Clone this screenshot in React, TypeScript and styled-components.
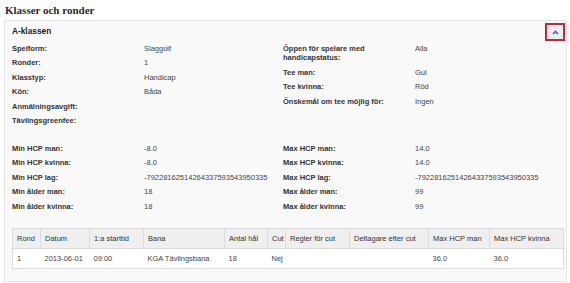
import React from "react";
import styled, { createGlobalStyle } from "styled-components";

const GlobalStyle = createGlobalStyle`
    html, body {
        margin: 0;
        padding: 0;
        background: #ffffff;
    }
    body {
        font-family: "Liberation Sans", Arial, sans-serif;
        color: #333;
    }
`;

const Page = styled.div`
    width: 570px;
    height: 283px;
    overflow: hidden;
`;

const Heading = styled.h2`
    margin: 0;
    padding: 4px 5px 0;
    height: 16px;
    box-sizing: border-box;
    font-family: "Liberation Serif", "Times New Roman", serif;
    font-size: 11px;
    line-height: 12px;
    font-weight: bold;
    color: #2b2b2b;
`;

const Panel = styled.div`
    margin: 4px 0 0 4px;
    width: 563px;
    box-sizing: border-box;
    background: #f9f9f9;
    border: 1px solid #e6e6e6;
    padding: 0 7px 12px;
`;

const PanelHeader = styled.div`
    display: flex;
    align-items: center;
    justify-content: space-between;
    height: 20px;
    margin-right: -6px;
`;

const PanelTitle = styled.div`
    font-size: 8.3px;
    font-weight: bold;
    color: #222;
`;

const ToggleFrame = styled.div`
    width: 20px;
    height: 18px;
    box-sizing: border-box;
    border: 2px solid #d0222c;
    display: flex;
    align-items: center;
    justify-content: center;
    margin-top: 2px;
`;

const ToggleButton = styled.button`
    width: 14px;
    height: 12px;
    padding: 0;
    border: 1px solid #e2e4e8;
    border-radius: 2px;
    background: #eef0f3;
    display: flex;
    align-items: center;
    justify-content: center;
    cursor: pointer;
`;

const Section = styled.div<{ $gap?: number }>`
    display: grid;
    grid-template-columns: 271px 1fr;
    margin-top: ${p => p.$gap ?? 0}px;
`;

const Column = styled.div`
    display: flex;
    flex-direction: column;
`;

const Row = styled.div`
    display: grid;
    grid-template-columns: 132px 1fr;
    padding: 2.5px 0;
    font-size: 7.5px;
    line-height: 9.5px;
`;

const Label = styled.div`
    font-weight: bold;
    color: #333;
    padding-right: 10px;
`;

const Value = styled.div`
    color: #444;
`;

const Table = styled.table`
    width: 551px;
    margin-top: 14px;
    border-collapse: collapse;
    border: 1px solid #dcdcdc;
    background: #fff;
    font-size: 7.5px;
    color: #333;
    table-layout: fixed;
`;

const Th = styled.th<{ $w: number }>`
    box-sizing: border-box;
    width: ${p => p.$w}px;
    height: 20px;
    padding: 0 4px;
    text-align: left;
    font-weight: normal;
    background: #efefef;
    border-left: 1px solid #dcdcdc;
    border-bottom: 1px solid #dcdcdc;
    white-space: nowrap;
    overflow: hidden;
`;

const Td = styled.td`
    height: 19px;
    padding: 0 4px;
    color: #444;
    white-space: nowrap;
    overflow: hidden;
`;

function ChevronUp() {
    return (
        <svg width="7" height="5" viewBox="0 0 7 5">
            <path d="M1 4 L3.5 1.5 L6 4" fill="none" stroke="#2a6db5" strokeWidth="1.6" />
        </svg>
    );
}

type Pair = [string, string];

const topLeft: Pair[] = [
    ["Spelform:", "Slaggolf"],
    ["Ronder:", "1"],
    ["Klasstyp:", "Handicap"],
    ["Kön:", "Båda"],
    ["Anmälningsavgift:", ""],
    ["Tävlingsgreenfee:", ""],
];

const topRight: Pair[] = [
    ["Öppen för spelare med handicapstatus:", "Alla"],
    ["Tee man:", "Gul"],
    ["Tee kvinna:", "Röd"],
    ["Önskemål om tee möjlig för:", "Ingen"],
];

const bottomLeft: Pair[] = [
    ["Min HCP man:", "-8.0"],
    ["Min HCP kvinna:", "-8.0"],
    ["Min HCP lag:", "-79228162514264337593543950335"],
    ["Min ålder man:", "18"],
    ["Min ålder kvinna:", "18"],
];

const bottomRight: Pair[] = [
    ["Max HCP man:", "14.0"],
    ["Max HCP kvinna:", "14.0"],
    ["Max HCP lag:", "-79228162514264337593543950335"],
    ["Max ålder man:", "99"],
    ["Max ålder kvinna:", "99"],
];

const columns: [string, number][] = [
    ["Rond", 28],
    ["Datum", 49],
    ["1:a starttid", 54],
    ["Bana", 81],
    ["Antal hål", 43],
    ["Cut", 18],
    ["Regler för cut", 64],
    ["Deltagare efter cut", 79],
    ["Max HCP man", 61],
    ["Max HCP kvinna", 74],
];

const rounds = [
    ["1", "2013-06-01", "09:00", "KGA Tävlingsbana", "18", "Nej", "", "", "36.0", "36.0"],
];

function InfoColumn({ rows }: { rows: Pair[] }) {
    return (
        <Column>
            {rows.map(([label, value]) => (
                <Row key={label}>
                    <Label>{label}</Label>
                    <Value>{value}</Value>
                </Row>
            ))}
        </Column>
    );
}

export default function App() {
    return (
        <Page>
            <GlobalStyle />
            <Heading>Klasser och ronder</Heading>
            <Panel>
                <PanelHeader>
                    <PanelTitle>A-klassen</PanelTitle>
                    <ToggleFrame>
                        <ToggleButton aria-label="Dölj">
                            <ChevronUp />
                        </ToggleButton>
                    </ToggleFrame>
                </PanelHeader>

                <Section>
                    <InfoColumn rows={topLeft} />
                    <InfoColumn rows={topRight} />
                </Section>

                <Section $gap={13}>
                    <InfoColumn rows={bottomLeft} />
                    <InfoColumn rows={bottomRight} />
                </Section>

                <Table>
                    <thead>
                        <tr>
                            {columns.map(([name, w]) => (
                                <Th key={name} $w={w}>{name}</Th>
                            ))}
                        </tr>
                    </thead>
                    <tbody>
                        {rounds.map((r, i) => (
                            <tr key={i}>
                                {r.map((cell, j) => <Td key={j}>{cell}</Td>)}
                            </tr>
                        ))}
                    </tbody>
                </Table>
            </Panel>
        </Page>
    );
}
